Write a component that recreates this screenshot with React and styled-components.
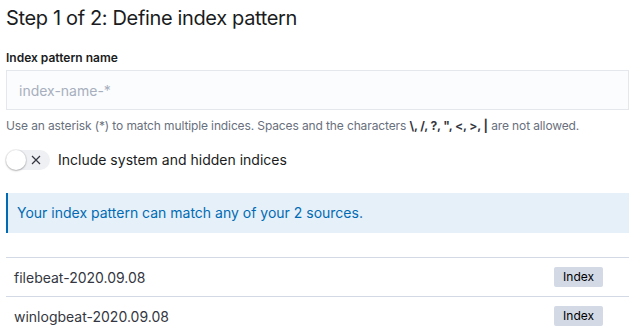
import React from "react";
import styled, { createGlobalStyle } from "styled-components";

const Global = createGlobalStyle`
  html, body {
    margin: 0;
    padding: 0;
    background: #fff;
    overflow: hidden;
  }
  body {
    font-family: Inter, "Noto Sans", sans-serif;
    color: #1a1c21;
  }
`

const Page = styled.main`
  width: 623px;
  padding: 4px 0 0 6px;
`

const Title = styled.h2`
  margin: 0;
  font-size: 20px;
  line-height: 28px;
  font-weight: 400;
  letter-spacing: -0.35px;
`

const Field = styled.div`
  margin-top: 18px;
  display: flex;
  flex-direction: column;
`

const Label = styled.label`
  font-size: 12px;
  line-height: 16px;
  font-weight: 600;
  margin-bottom: 4px;
`

const Input = styled.input`
  box-sizing: border-box;
  height: 40px;
  width: 100%;
  border: 1px solid #e4e7ec;
  background: #fbfcfd;
  padding: 0 12px;
  font-family: inherit;
  font-size: 14px;
  color: #1a1c21;
  outline: none;

  &::placeholder {
    color: #a7afbe;
  }
`

const Help = styled.p`
  margin: 8px 0 0;
  font-size: 12px;
  line-height: 16px;
  letter-spacing: -0.12px;
  color: #69707d;

  strong {
    color: #343741;
    font-weight: 700;
  }
`

const SwitchRow = styled.div`
  margin-top: 16px;
  display: flex;
  align-items: center;
  gap: 8px;
  font-size: 14px;
  line-height: 20px;
`

const Switch = styled.button`
  position: relative;
  width: 44px;
  height: 20px;
  border: none;
  border-radius: 10px;
  background: #eef0f3;
  padding: 0;
  display: flex;
  align-items: center;
  justify-content: flex-end;
  padding-right: 8px;
  box-sizing: border-box;
  color: #343741;
`

const Knob = styled.span`
  position: absolute;
  left: 0;
  top: 0;
  width: 20px;
  height: 20px;
  border-radius: 50%;
  background: #fff;
  box-shadow: 0 1px 2px rgba(0, 0, 0, 0.25), 0 0 0 1px rgba(0, 0, 0, 0.06);
`

const Callout = styled.div`
  margin-top: 23px;
  background: #e6f0f8;
  border-left: 2px solid #006bb4;
  padding: 10px 9px;
  font-size: 14px;
  line-height: 20px;
  color: #006bb4;
`

const Table = styled.div`
  margin-top: 24px;
  border-top: 1px solid #d3dae6;
`

const Row = styled.div`
  display: flex;
  align-items: center;
  justify-content: space-between;
  height: 38px;
  border-bottom: 1px solid #d3dae6;
  padding: 0 26px 0 8px;
  font-size: 14px;
  color: #343741;
`

const Badge = styled.span`
  background: #d3dae6;
  color: #000;
  font-size: 12px;
  line-height: 20px;
  padding: 0 9px;
  border-radius: 2px;
`

const sources = ["filebeat-2020.09.08", "winlogbeat-2020.09.08"];

const App = () => (
  <Page>
    <Global />
    <Title>Step 1 of 2: Define index pattern</Title>
    <Field>
      <Label>Index pattern name</Label>
      <Input placeholder="index-name-*" />
      <Help>
        Use an asterisk (*) to match multiple indices. Spaces and the characters{" "}
        <strong>\, /, ?, ", &lt;, &gt;, |</strong> are not allowed.
      </Help>
    </Field>
    <SwitchRow>
      <Switch>
        <Knob />
        <svg width="12" height="12" viewBox="0 0 12 12">
          <path d="M2 2 L10 10 M10 2 L2 10" stroke="currentColor" strokeWidth="1.2" fill="none" />
        </svg>
      </Switch>
      Include system and hidden indices
    </SwitchRow>
    <Callout>Your index pattern can match any of your 2 sources.</Callout>
    <Table>
      {sources.map((s) => (
        <Row key={s}>
          {s}
          <Badge>Index</Badge>
        </Row>
      ))}
    </Table>
  </Page>
);

export default App;
